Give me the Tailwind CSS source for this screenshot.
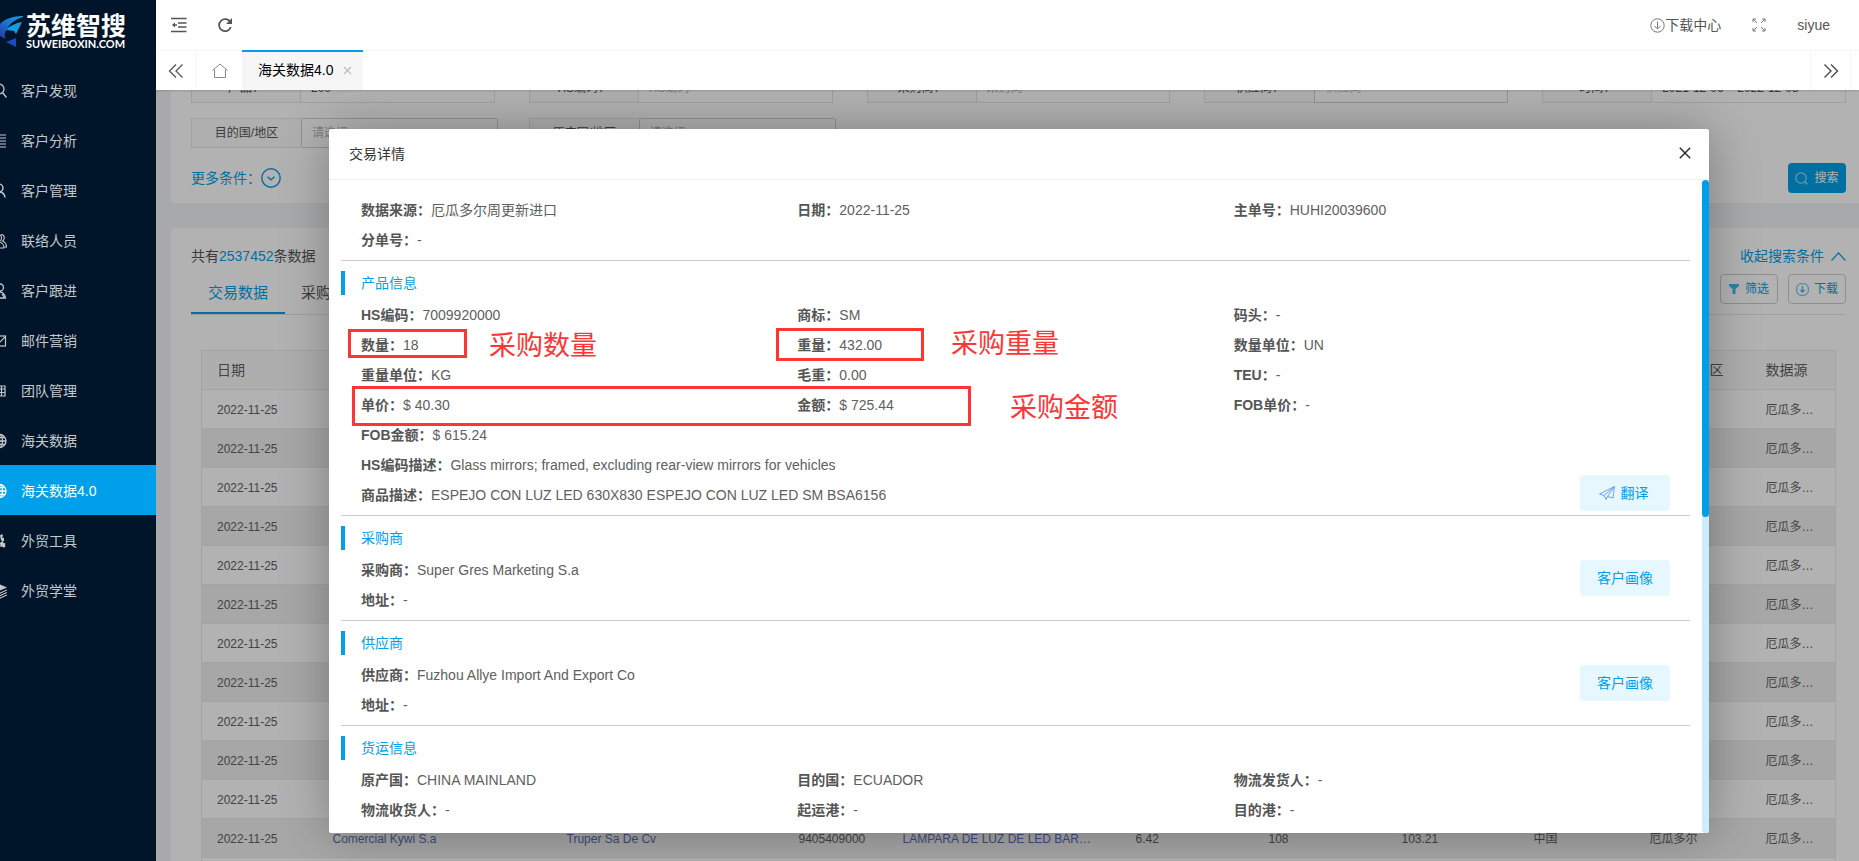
<!DOCTYPE html>
<html lang="zh-CN">
<head>
<meta charset="utf-8">
<title>海关数据4.0</title>
<script src="https://cdn.jsdelivr.net/npm/@tailwindcss/browser@4"></script>
</head>
<body class="flex h-screen overflow-hidden bg-white font-['Liberation_Sans','Noto_Sans_CJK_SC',sans-serif] text-sm text-[#555]">

<!-- Sidebar -->
<aside class="w-[156px] shrink-0 overflow-hidden bg-[#001529]">
  <a href="#" class="flex h-[65px] items-start gap-[3px] pt-[15px] text-white">
    <svg class="mt-px h-[32px] w-[23px] shrink-0" viewBox="0 0 23 32">
      <defs>
        <linearGradient id="lg1" x1="1" y1="0" x2="0" y2="1"><stop offset="0" stop-color="#12a5e8"/><stop offset=".5" stop-color="#1b74d0"/><stop offset="1" stop-color="#2438a8"/></linearGradient>
      </defs>
      <path d="M23 0C13 0 4 3 0 8v12l6 3c-1-2-2-4-1-6C7 10 13 4 23 1z" fill="url(#lg1)"/>
      <path d="M22 6C16 7 9 10 6 14l8 1 2 3z" fill="#169be0"/>
      <path d="M6 26 16 22v9z" fill="#1f49c0"/>
    </svg>
    <span class="block">
      <span class="block text-[25px] leading-[22px] font-bold">苏维智搜</span>
      <span class="block font-['Lato',sans-serif] text-[11px] leading-[13px] font-bold">SUWEIBOXIN.COM</span>
    </span>
  </a>
  <nav class="text-[#c3c8cd] [&_a]:pt-[2px]">
    <a href="#" class="-ml-[9px] flex h-[50px] items-center gap-[14px]"><svg class="size-4" viewBox="0 0 16 16" fill="none" stroke="currentColor" stroke-width="1.300"><circle cx="8" cy="6" r="5"/><path d="m11.500 9.500 4 5"/></svg>客户发现</a>
    <a href="#" class="-ml-[9px] flex h-[50px] items-center gap-[14px]"><svg class="size-4" viewBox="0 0 16 16" fill="none" stroke="currentColor" stroke-width="1.100"><path d="M1 2h14M8 5h7M8 8h7M8 11h7M1 14h14M1 5h4v6H1z"/></svg>客户分析</a>
    <a href="#" class="-ml-[9px] flex h-[50px] items-center gap-[14px]"><svg class="size-4" viewBox="0 0 16 16" fill="none" stroke="currentColor" stroke-width="1.400"><circle cx="8" cy="5" r="4"/><path d="M2 15c1-4 4-6 6-6 3.500 0 5.500 2 6 5.500"/></svg>客户管理</a>
    <a href="#" class="-ml-[9px] flex h-[50px] items-center gap-[14px]"><svg class="size-4" viewBox="0 0 16 16" fill="none" stroke="currentColor" stroke-width="1.100"><circle cx="7" cy="5" r="3.500"/><path d="M1 15c0-4 3-6 6-6s6 2 6 6zM10 1.500c4 0 4 5 1.500 6.500 2.500 1 4 3 4 6h-2.500"/></svg>联络人员</a>
    <a href="#" class="-ml-[9px] flex h-[50px] items-center gap-[14px]"><svg class="size-4" viewBox="0 0 16 16" fill="none" stroke="currentColor" stroke-width="1.300"><circle cx="9" cy="4.500" r="3.500"/><path d="M3 15c0-4 3-6 6-6 2 0 5 2 5.500 6zM11 11l2 3"/></svg>客户跟进</a>
    <a href="#" class="-ml-[9px] flex h-[50px] items-center gap-[14px]"><svg class="size-4" viewBox="0 0 16 16" fill="none" stroke="currentColor" stroke-width="1.200"><rect x="1" y="3" width="13.500" height="10"/><path d="m2 5 6 5 6-6"/></svg>邮件营销</a>
    <a href="#" class="-ml-[9px] flex h-[50px] items-center gap-[14px]"><svg class="size-4" viewBox="0 0 16 16" fill="none" stroke="currentColor" stroke-width="1.200"><path d="M1 3h13v10H1zM1 6h13M1 9.500h13M6 3v10M10.500 3v10"/></svg>团队管理</a>
    <a href="#" class="-ml-[9px] flex h-[50px] items-center gap-[14px]"><svg class="size-4" viewBox="0 0 16 16" fill="none" stroke="currentColor" stroke-width="1.300"><circle cx="8.500" cy="8" r="6.500"/><ellipse cx="8.500" cy="8" rx="3" ry="6.500"/><path d="M2 8h13M3 4.500h11M3 11.500h11M8.500 2v12"/></svg>海关数据</a>
    <a href="#" class="flex h-[50px] items-center bg-[#009fe9] text-white"><span class="-ml-[9px] flex items-center gap-[14px]"><svg class="size-4" viewBox="0 0 16 16" fill="none" stroke="currentColor" stroke-width="1.300"><circle cx="8.500" cy="8" r="6.500"/><ellipse cx="8.500" cy="8" rx="3" ry="6.500"/><path d="M2 8h13M3 4.500h11M3 11.500h11M8.500 2v12"/></svg>海关数据4.0</span></a>
    <a href="#" class="-ml-[9px] flex h-[50px] items-center gap-[14px]"><svg class="size-4" viewBox="0 0 16 16" fill="currentColor"><path d="M9 2.500 11 1l1 1.500-1 2 2 .5v3l-2 .5-1-1.500zM10 9l2-.500.500 1.500 2 .5-.500 2 .500 1.500-2 .500-1.500-1-2 .500.500-2-1-1.500z"/></svg>外贸工具</a>
    <a href="#" class="-ml-[9px] flex h-[50px] items-center gap-[14px]"><svg class="size-4" viewBox="0 0 16 16" fill="none" stroke="currentColor" stroke-width="1.100"><path d="M8 1l8 3.500L8 8 1 4.500z" fill="currentColor" stroke="none"/><path d="m1 8 7 2.500L16 7M1 10.500 8 13l8-3.500M1 13l7 2.500L16 12"/></svg>外贸学堂</a>
  </nav>
</aside>

<div class="flex min-w-0 flex-1 flex-col">
  <!-- Top bar and page tabs -->
  <header class="relative z-10 shrink-0 bg-white shadow-[0_1px_2px_rgba(0,0,0,0.15)]">
    <div class="flex h-[50px] items-center justify-between pr-[29px] pl-[15px]">
      <div class="flex items-center gap-[30px] text-[#555]">
        <button aria-label="收起菜单"><svg class="block size-4" viewBox="0 0 16 16" fill="none" stroke="currentColor" stroke-width="1.400"><path d="M0 1.500h15.500M7 6h8.500M7 10h8.500M0 14.500h15.500M2 8h4"/><path d="M4 5.500v5L1 8z" fill="currentColor" stroke="none"/></svg></button>
        <button aria-label="刷新"><svg class="block size-4" viewBox="0 0 16 16" fill="none" stroke="currentColor" stroke-width="1.800"><path d="M13.500 5.500A6 6 0 1 0 13.800 10"/><path d="M15 1v6H9z" fill="currentColor" stroke="none"/></svg></button>
      </div>
      <div class="flex items-center">
        <a href="#" class="flex items-center"><svg class="size-[15px]" viewBox="0 0 15 15" fill="none" stroke="#777"><circle cx="7.500" cy="7.500" r="6.700"/><path d="M7.500 3.500v7.500M4.500 8l3 3 3-3"/></svg>下载中心</a>
        <button class="ml-[31px]" aria-label="全屏"><svg class="block size-[14px]" viewBox="0 0 14 14" fill="none" stroke="#777"><path d="M1 4V1h3M1 1l4 4M10 1h3v3M13 1 9 5M1 10v3h3M1 13l4-4M13 10v3h-3M13 13 9 9"/></svg></button>
        <button class="ml-[31px]">siyue</button>
      </div>
    </div>
    <div class="flex h-[40px] border-t border-[#f6f6f6] text-black">
      <button class="flex w-[41px] items-center justify-center border-r border-[#f6f6f6]" aria-label="向左滚动"><svg class="size-4" viewBox="0 0 16 16" fill="none" stroke="#555" stroke-width="1.300"><path d="M8 1.500 1.500 8 8 14.500M14.500 1.500 8 8l6.500 6.500"/></svg></button>
      <button class="flex w-[45px] items-center justify-center" aria-label="主页"><svg class="size-4" viewBox="0 0 16 16" fill="none" stroke="#888"><path d="M.5 7.500 8 1l7.500 6.500M2.500 6.500v8h11v-8"/></svg></button>
      <div class="-mt-px flex items-center gap-[10px] border-t-2 border-[#009fe9] bg-[#f6f6f6] pr-[11px] pb-[2px] pl-[16px]">
        <a href="#">海关数据4.0</a>
        <button aria-label="关闭标签"><svg class="block size-[9px]" viewBox="0 0 9 9" stroke="#bbb" stroke-width="1.100"><path d="m1 1 7 7M8 1 1 8"/></svg></button>
      </div>
      <button class="mr-[8px] ml-auto flex w-[41px] items-center justify-center border-x border-[#f6f6f6]" aria-label="向右滚动"><svg class="size-4" viewBox="0 0 16 16" fill="none" stroke="#444" stroke-width="1.300"><path d="M1.500 1.500 8 8l-6.500 6.500M8 1.500 14.500 8 8 14.500"/></svg></button>
    </div>
  </header>

  <main class="relative flex-1 overflow-hidden bg-[#f0f2f5]">
    <div class="-mt-[37px] -mr-[7px] ml-[15px]">
      <!-- Filters -->
      <section class="rounded bg-white px-5 pt-5 pb-[10px]">
        <div class="grid grid-cols-5 gap-x-[34px] gap-y-[15px] text-xs">
          <label class="flex h-[30px] border border-[#e6e6e6]"><span class="flex w-[109px] shrink-0 items-center justify-center border-r border-[#e6e6e6] bg-[#fbfbfb]">产品：</span><input class="w-full min-w-0 px-[10px]" value="200"></label>
          <label class="flex h-[30px] border border-[#e6e6e6]"><span class="flex w-[109px] shrink-0 items-center justify-center border-r border-[#e6e6e6] bg-[#fbfbfb]">HS编码：</span><input class="w-full min-w-0 px-[10px] placeholder:text-[#b5b5b5]" placeholder="HS编码"></label>
          <label class="flex h-[30px] border border-[#e6e6e6]"><span class="flex w-[109px] shrink-0 items-center justify-center border-r border-[#e6e6e6] bg-[#fbfbfb]">采购商：</span><input class="w-full min-w-0 px-[10px] placeholder:text-[#b5b5b5]" placeholder="采购商"></label>
          <label class="flex h-[30px]"><span class="flex w-[110px] shrink-0 items-center justify-center border border-r-0 border-[#e6e6e6] bg-[#fbfbfb]">供应商：</span><input class="w-full min-w-0 border border-[#d2d2d2] px-[10px] placeholder:text-[#ccc]" placeholder="供应商"></label>
          <label class="flex h-[30px] border border-[#e6e6e6]"><span class="flex w-[109px] shrink-0 items-center justify-center border-r border-[#e6e6e6] bg-[#fbfbfb]">时间：</span><input class="w-full min-w-0 px-[10px]" value="2021-12-06 ~ 2022-12-05"></label>
          <label class="-mr-[3px] flex h-[30px]"><span class="flex w-[110px] shrink-0 items-center justify-center border border-r-0 border-[#e6e6e6] bg-[#fbfbfb]">目的国/地区</span><select class="w-full min-w-0 appearance-none rounded-xs border border-[#d2d2d2] px-[10px] text-[#b5b5b5]"><option>请选择</option></select></label>
          <label class="-mr-[3px] flex h-[30px]"><span class="flex w-[110px] shrink-0 items-center justify-center border border-r-0 border-[#e6e6e6] bg-[#fbfbfb]">原产国/地区</span><select class="w-full min-w-0 appearance-none rounded-xs border border-[#d2d2d2] px-[10px] text-[#b5b5b5]"><option>请选择</option></select></label>
        </div>
        <div class="mt-[15px] flex h-[30px] items-center justify-between">
          <button class="flex items-center text-[#009fe9]">更多条件：<svg class="size-5" viewBox="0 0 20 20" fill="none" stroke="currentColor" stroke-width="1.400"><circle cx="10" cy="10" r="9.200"/><path d="m6.500 8.800 3.500 3 3.500-3"/></svg></button>
          <button class="flex h-[30px] w-[58px] items-center justify-center gap-[6px] rounded bg-[#009fe9] text-xs text-white"><svg class="size-[13px]" viewBox="0 0 13 13" fill="none" stroke="#a5dcf5" stroke-width="1.200"><circle cx="6" cy="6" r="5.200"/><path d="m9.500 9.500 3 2.800"/></svg>搜索</button>
        </div>
      </section>

      <!-- Results -->
      <section class="mt-[25px] rounded bg-white px-5 pt-[18px] pb-5">
        <div class="flex h-5 items-center justify-between">
          <p>共有<span class="text-[#009fe9]">2537452</span>条数据</p>
          <button class="flex items-center gap-[7px] text-[#009fe9]">收起搜索条件<svg class="h-[9px] w-[15px]" viewBox="0 0 15 9" fill="none" stroke="currentColor" stroke-width="1.200"><path d="M.5 8.500 7.500 1l7 7.500"/></svg></button>
        </div>
        <div class="mt-[8px] flex h-[41px] items-start border-b border-[#e6e6e6]">
          <a href="#" class="h-[40px] border-b-2 border-[#009fe9] px-[17px] text-[15px] leading-[38px] text-[#009fe9]">交易数据</a>
          <a href="#" class="px-[16px] text-[15px] leading-[38px]">采购商</a>
          <div class="ml-auto flex gap-[10px] text-xs text-[#009fe9]">
            <button class="flex h-[30px] w-[58px] items-center justify-center gap-[6px] rounded border border-[#ccc]"><svg class="size-[10px]" viewBox="0 0 10 10" fill="#4bb8e8"><path d="M0 0h10v2L6.500 5v5h-3V5L0 2z"/></svg>筛选</button>
            <button class="flex h-[30px] w-[58px] items-center justify-center gap-[5px] rounded border border-[#ccc]"><svg class="size-[13px]" viewBox="0 0 13 13" fill="none" stroke="#4bb8e8"><rect x=".7" y=".7" width="11.600" height="11.600" rx="4.500"/><path d="M6.500 3v6M4.500 7l2 2 2-2" stroke-width="1.300"/></svg>下载</button>
          </div>
        </div>
        <div class="mt-[35px] px-[10px]">
          <table class="w-full table-fixed border-collapse border border-[#eaeaea] text-left text-xs text-[#606060]">
            <colgroup><col class="w-[116px]"><col class="w-[234px]"><col class="w-[232px]"><col class="w-[104px]"><col class="w-[233px]"><col class="w-[133px]"><col class="w-[133px]"><col class="w-[132px]"><col class="w-[116px]"><col class="w-[116px]"><col></colgroup>
            <thead>
              <tr class="h-[39px] border-b border-[#eaeaea] bg-[#fafafa] text-sm"><th class="pl-[15px] font-normal">日期</th><th></th><th></th><th></th><th></th><th></th><th></th><th></th><th></th><th class="pl-[15px] font-normal">目的国/地区</th><th class="pl-[15px] font-normal">数据源</th></tr>
            </thead>
            <tbody id="rows"></tbody>
          </table>
        </div>
      </section>
    </div>

    <div class="absolute inset-0 bg-black/30"></div>

    <!-- Transaction detail dialog -->
    <div role="dialog" aria-labelledby="dlg-title" class="absolute top-[39px] right-[150px] bottom-[28px] left-[173px] flex flex-col rounded-xs bg-white shadow-[1px_1px_50px_rgba(0,0,0,0.3)]">
      <div class="flex h-[51px] shrink-0 items-center justify-between border-b border-[#eee] pr-[18px] pl-5">
        <h2 id="dlg-title" class="text-[#333]">交易详情</h2>
        <button class="pb-[2px]" aria-label="关闭"><svg class="block size-[12px]" viewBox="0 0 12 12" stroke="#2b2b3d" stroke-width="1.500"><path d="m.8.8 10.400 10.400M11.200.8.8 11.200"/></svg></button>
      </div>
      <div class="flex min-h-0 flex-1">
        <div class="min-w-0 flex-1 overflow-hidden pt-[15px] pr-[12px] pl-[12px] leading-[30px] text-[#606060] [&_b]:text-[#555]">
          <section class="border-b border-[#ccc] px-5 pb-[5px]">
            <div class="grid grid-cols-3">
              <p><b>数据来源：</b>厄瓜多尔周更新进口</p><p><b>日期：</b>2022-11-25</p><p><b>主单号：</b>HUHI20039600</p>
              <p><b>分单号：</b>-</p>
            </div>
          </section>
          <section class="border-b border-[#ccc] pt-[10px] pb-[5px]">
            <h3 class="mb-[5px] border-l-4 border-[#009fe9] pl-[16px] leading-6 text-[#009fe9]">产品信息</h3>
            <div class="grid grid-cols-3 px-5">
              <p><b>HS编码：</b>7009920000</p><p><b>商标：</b>SM</p><p><b>码头：</b>-</p>
              <p><b>数量：</b>18</p><p><b>重量：</b>432.00</p><p><b>数量单位：</b>UN</p>
              <p><b>重量单位：</b>KG</p><p><b>毛重：</b>0.00</p><p><b>TEU：</b>-</p>
              <p><b>单价：</b>$ 40.30</p><p><b>金额：</b>$ 725.44</p><p><b>FOB单价：</b>-</p>
              <p class="col-span-3"><b>FOB金额：</b>$ 615.24</p>
              <p class="col-span-3"><b>HS编码描述：</b>Glass mirrors; framed, excluding rear-view mirrors for vehicles</p>
              <div class="col-span-3 flex h-[30px] items-end justify-between"><p><b>商品描述：</b>ESPEJO CON LUZ LED 630X830 ESPEJO CON LUZ LED SM BSA6156</p>
                <button class="-mb-px flex h-[36px] w-[90px] shrink-0 items-center justify-center gap-[6px] rounded bg-[#e6f7ff] pr-[3px] text-[#009fe9]"><svg class="size-4" viewBox="0 0 16 16" fill="none" stroke="#6ba6f2" stroke-linejoin="round"><path d="M15.500 1.500.5 9l4.500 1.500zM15.500 1.500 14 13l-5.500-1.500zM5 10.500 7 14.500l1.500-3"/></svg>翻译</button>
              </div>
            </div>
          </section>
          <section class="border-b border-[#ccc] pt-[10px] pb-[5px]">
            <h3 class="mb-[5px] border-l-4 border-[#009fe9] pl-[16px] leading-6 text-[#009fe9]">采购商</h3>
            <div class="flex items-start justify-between px-5">
              <div><p><b>采购商：</b>Super Gres Marketing S.a</p><p><b>地址：</b>-</p></div>
              <button class="mt-[5px] h-[36px] w-[90px] rounded bg-[#e6f7ff] text-[#009fe9]">客户画像</button>
            </div>
          </section>
          <section class="border-b border-[#ccc] pt-[10px] pb-[5px]">
            <h3 class="mb-[5px] border-l-4 border-[#009fe9] pl-[16px] leading-6 text-[#009fe9]">供应商</h3>
            <div class="flex items-start justify-between px-5">
              <div><p><b>供应商：</b>Fuzhou Allye Import And Export Co</p><p><b>地址：</b>-</p></div>
              <button class="mt-[5px] h-[36px] w-[90px] rounded bg-[#e6f7ff] text-[#009fe9]">客户画像</button>
            </div>
          </section>
          <section class="pt-[10px]">
            <h3 class="mb-[5px] border-l-4 border-[#009fe9] pl-[16px] leading-6 text-[#009fe9]">货运信息</h3>
            <div class="grid grid-cols-3 px-5">
              <p><b>原产国：</b>CHINA MAINLAND</p><p><b>目的国：</b>ECUADOR</p><p><b>物流发货人：</b>-</p>
              <p><b>物流收货人：</b>-</p><p><b>起运港：</b>-</p><p><b>目的港：</b>-</p>
            </div>
          </section>
        </div>
        <div class="w-[7px] shrink-0 rounded bg-[#cceefc]"><div class="h-[337px] rounded bg-[#009fe9]"></div></div>
      </div>

      <!-- Red callouts drawn over the dialog -->
      <div class="absolute top-[200px] left-[19px] h-[29px] w-[119px] border-3 border-[#fd3535]"></div>
      <div class="absolute top-[199px] left-[447px] h-[33px] w-[148px] border-3 border-[#fd3535]"></div>
      <div class="absolute top-[257px] left-[23px] h-[40px] w-[619px] border-3 border-[#fd3535]"></div>
      <span class="absolute top-[201px] left-[160px] text-[27px] leading-[32px] text-[#fd3535]">采购数量</span>
      <span class="absolute top-[199px] left-[622px] text-[27px] leading-[32px] text-[#fd3535]">采购重量</span>
      <span class="absolute top-[263px] left-[681px] text-[27px] leading-[32px] text-[#fd3535]">采购金额</span>
    </div>
  </main>
</div>

<script>
  // The last full row is the only one whose middle columns show below the dialog.
  const detail = ['Comercial Kywi S.a', 'Truper Sa De Cv', '9405409000', 'LAMPARA DE LUZ DE LED BARRA LINEAL', '6.42', '108', '103.21', '中国', '厄瓜多尔'];
  const linked = [0, 1, 3];
  let html = '';
  for (let r = 0; r < 13; r++) {
    html += '<tr class="h-[39px] border-b border-[#eaeaea] even:bg-[#f0f0f0]"><td class="pt-[2px] pl-[15px]">2022-11-25</td>';
    for (let c = 0; c < 9; c++) {
      const t = r === 11 ? detail[c] : '';
      html += linked.includes(c)
        ? '<td class="truncate pt-[2px] pr-[24px] pl-[15px] text-[#5a6fb0]"><a href="#">' + t + '</a></td>'
        : '<td class="truncate pt-[2px] pl-[15px]">' + t + '</td>';
    }
    html += '<td class="truncate pt-[2px] pr-[20px] pl-[15px]">厄瓜多尔周更新进口</td></tr>';
  }
  document.getElementById('rows').innerHTML = html;
</script>
</body>
</html>
